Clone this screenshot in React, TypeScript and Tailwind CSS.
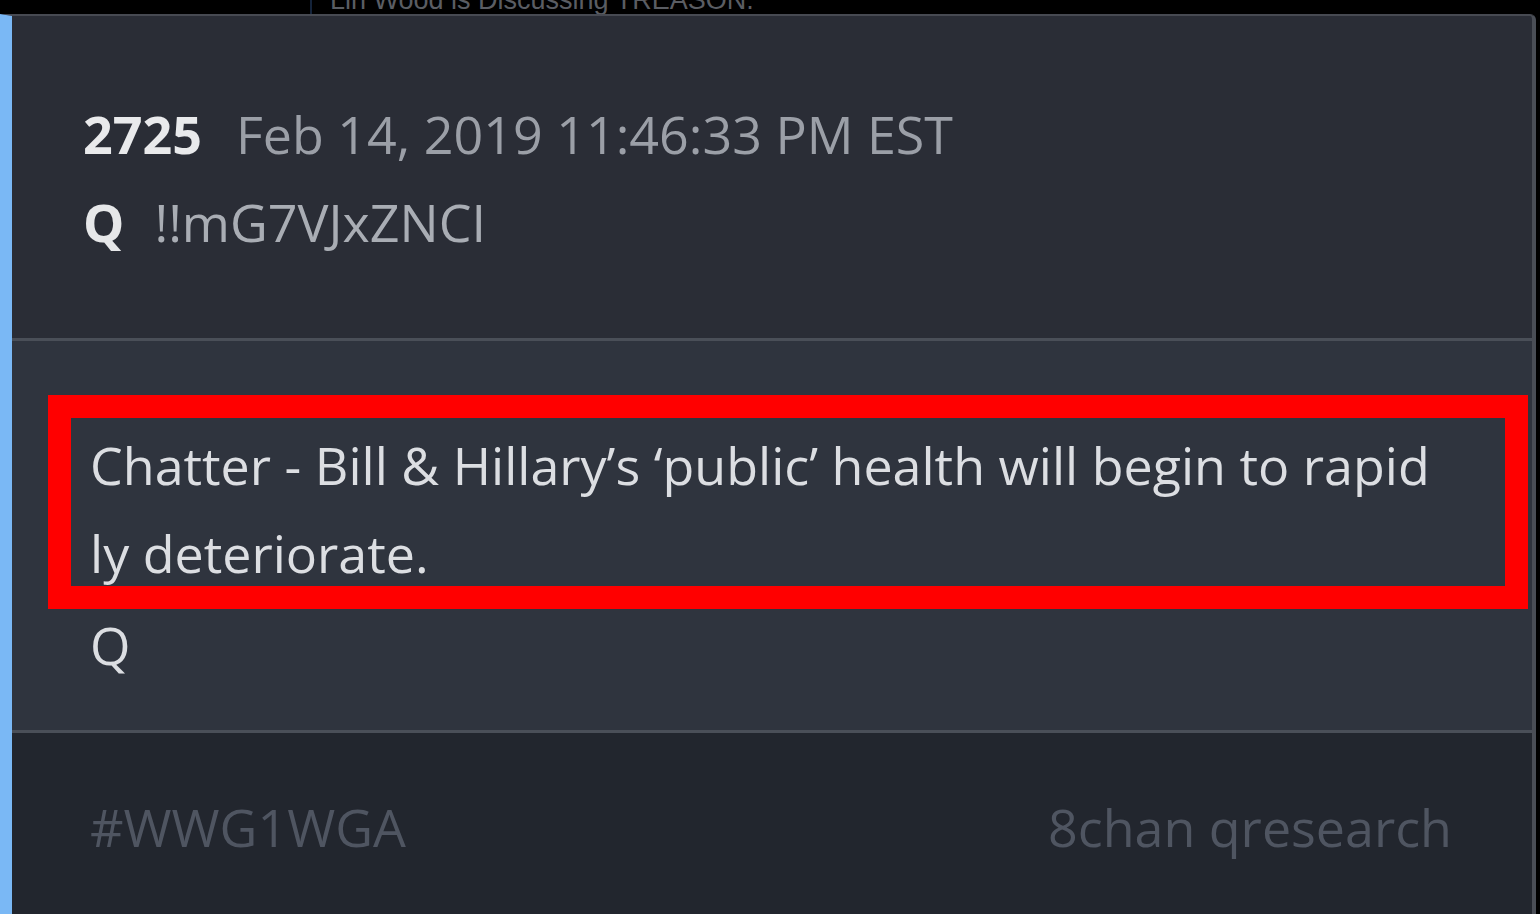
export default function App() {
  return (
    <div className="flex h-[914px] w-[1540px] flex-col overflow-hidden bg-black font-['Open_Sans',sans-serif]">
      {/* strip of the previous post, cut off at the top */}
      <div className="relative h-[14px] shrink-0 overflow-hidden">
        <div className="absolute left-[310px] top-0 h-[14px] w-[2px] bg-[#14233a]" />
        <div className="-mt-[13px] pl-[330px] font-['Liberation_Sans',Arial,sans-serif] text-[27px] leading-[27px] text-[#5a5d63]">
          Lin Wood is Discussing TREASON.
        </div>
      </div>

      <div className="mr-[4px] flex flex-1 flex-col overflow-hidden rounded-tr-md border-t-2 border-r-4 border-l-[12px] border-t-[#474a52] border-r-[#4a4e56] border-l-[#7ab8f5] bg-[#2a2d36]">
        {/* header */}
        <div className="h-[322px] shrink-0 pl-[71px] pt-[74px] text-[52px] leading-[88px]">
          <div className="flex items-baseline gap-[34px]">
            <span className="font-bold text-[#e9eaec]">2725</span>
            <span className="text-[#9b9fa7]">Feb 14, 2019 11:46:33 PM EST</span>
          </div>
          <div className="flex items-baseline gap-[30px]">
            <span className="font-bold text-[#e6e7e9]">Q</span>
            <span className="text-[#a9adb4]">!!mG7VJxZNCI</span>
          </div>
        </div>

        {/* body */}
        <div className="relative h-[395px] shrink-0 border-y-[3px] border-[#4a4f58] bg-[#2f343e] pl-[78px] pt-[80px] text-[52px] leading-[88px] text-[#dcdee2]">
          <p>
            Chatter - Bill &amp; Hillary’s ‘public’ health will begin to rapid
            <br />
            ly deteriorate.
          </p>
          <p className="mt-[4px]">Q</p>
          <div className="absolute left-[36px] top-[54px] h-[214px] w-[1480px] border-[23px] border-[#ff0000]" />
        </div>

        {/* footer */}
        <div className="flex flex-1 items-start justify-between bg-[#22262e] pl-[78px] pr-[80px] pt-[50px] text-[52px] leading-[88px] text-[#4f5561]">
          <span>#WWG1WGA</span>
          <span>8chan qresearch</span>
        </div>
      </div>
    </div>
  )
}
